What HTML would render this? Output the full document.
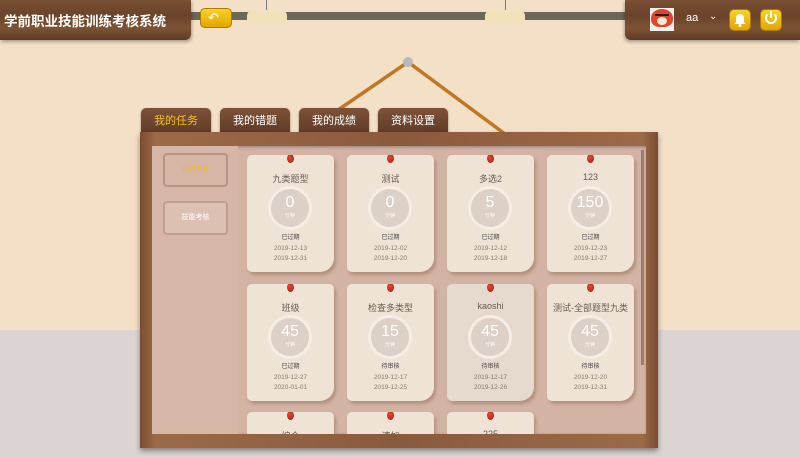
<!DOCTYPE html>
<html style="overflow:hidden;height:458px"><head><meta charset="utf-8"><style>
*{margin:0;padding:0;box-sizing:border-box}
body{width:800px;height:458px;overflow:hidden;position:relative;background:#f4dfc7;font-family:"Liberation Sans","Noto Sans CJK SC",sans-serif}
.a{position:absolute}
.wood{background:linear-gradient(180deg,#7a4f33,#6a432a 40%,#7d5335 70%,#5e3a24);}
.tab{position:absolute;top:108px;height:26px;border-radius:5px 5px 0 0;background:linear-gradient(#7e5238,#5e3a26);color:#fff;font-size:11px;text-align:center;line-height:26px;box-shadow:0 1px 2px rgba(0,0,0,.4)}
.card{position:absolute;width:87px;height:117px;background:#efe3d6;border-radius:5px 5px 14px 5px;box-shadow:2px 3px 3px rgba(120,80,60,.35);text-align:center;color:#6a5a52;overflow:hidden}
.card .pin{position:absolute;left:40px;top:-1px;width:7px;height:9px;border-radius:50%;background:radial-gradient(circle at 40% 40%,#e24a3a,#9c1a12)}
.card .t{position:absolute;top:17px;width:100%;font-size:9px}
.card .c{position:absolute;left:21px;top:31px;width:44px;height:44px;border-radius:50%;background:#ddd0c6;border:3px solid #f5ede6;color:#fff}
.card .c b{display:block;font-weight:normal;font-size:16px;margin-top:6px;line-height:16px}
.card .c i{display:block;font-style:normal;font-size:5px;margin-top:1px}
.card .s{position:absolute;top:77px;width:100%;font-size:6px;color:#444}
.card .d{position:absolute;top:89px;width:100%;font-size:6.5px;line-height:10px;color:#8a7a72}
.yb{position:absolute;width:22px;height:22px;border-radius:5px;background:linear-gradient(#f8d22a,#e2a500);border:1px solid #b07a00}
</style></head><body>
<div class="a" style="left:0;top:330px;width:800px;height:128px;background:#dcd4d2"></div>
<div class="a" style="left:266px;top:0;width:1px;height:10px;background:#777"></div>
<div class="a" style="left:505px;top:0;width:1px;height:10px;background:#777"></div>
<div class="a" style="left:190px;top:12px;width:440px;height:8px;background:#6c6757"></div>
<div class="a" style="left:247px;top:10px;width:40px;height:14px;background:#f2e2bb;border-radius:6px 6px 2px 2px"></div>
<div class="a" style="left:485px;top:10px;width:40px;height:14px;background:#f2e2bb;border-radius:6px 6px 2px 2px"></div>
<div class="a wood" style="left:0;top:0;width:191px;height:40px;border-radius:0 0 6px 0;box-shadow:1px 2px 3px rgba(0,0,0,.3)"></div>
<div class="a" style="left:4px;top:10px;color:#fff;font-size:13.5px;font-weight:bold">学前职业技能训练考核系统</div>
<div class="yb" style="left:200px;top:8px;width:32px;height:20px"></div>
<div class="a" style="left:208px;top:10px;color:#fff;font-size:13px">&#8630;</div>
<div class="a wood" style="left:625px;top:0;width:175px;height:40px;border-radius:0 0 0 6px;box-shadow:-1px 2px 3px rgba(0,0,0,.3)"></div>
<div class="a" style="left:650px;top:8px;width:24px;height:23px;background:#f3f0ec"></div>
<div class="a" style="left:651px;top:9px;width:22px;height:18px;border-radius:50% 50% 40% 40%;background:#e2452c"></div>
<div class="a" style="left:657px;top:17px;width:10px;height:8px;border-radius:50%;background:#f3e8d0"></div>
<div class="a" style="left:655px;top:14px;width:14px;height:2px;background:#222"></div>
<div class="a" style="left:686px;top:12px;color:#fff;font-size:11px">aa</div>
<div class="a" style="left:709px;top:11px;color:#fff;font-size:10px">&#8964;</div>
<div class="yb" style="left:729px;top:9px"></div>
<svg class="a" style="left:733px;top:12px" width="14" height="16"><path d="M7 2 C4 2 3 4 3 7 L3 10 L1.5 12 L12.5 12 L11 10 L11 7 C11 4 10 2 7 2Z" fill="#fff"/><circle cx="7" cy="13.5" r="1.5" fill="#fff"/></svg>
<div class="yb" style="left:760px;top:9px"></div>
<div class="a" style="left:765px;top:12px;width:12px;height:12px;border:2px solid #fff;border-radius:50%;border-top-color:transparent"></div>
<div class="a" style="left:770px;top:11px;width:2px;height:7px;background:#fff"></div>
<svg class="a" style="left:320px;top:50px" width="200" height="90"><path d="M18 60 L88 12 L185 84" stroke="#c07724" stroke-width="3.5" fill="none"/><circle cx="88" cy="12" r="5" fill="#b8b8b8"/></svg>
<div class="tab" style="left:141px;width:70px;color:#f2c11c">我的任务</div>
<div class="tab" style="left:220px;width:70px">我的错题</div>
<div class="tab" style="left:299px;width:70px">我的成绩</div>
<div class="tab" style="left:378px;width:70px">资料设置</div>
<div class="a" style="left:140px;top:132px;width:518px;height:316px;background:linear-gradient(90deg,#7b4c30,#9b6a48 3%,#8a5a3c 50%,#9b6a48 97%,#7b4c30);box-shadow:0 3px 5px rgba(0,0,0,.4)"></div>
<div class="a" style="left:152px;top:146px;width:494px;height:288px;background:#d3b3a4;box-shadow:inset 1px 1px 3px rgba(0,0,0,.3);overflow:hidden">
<div class="a" style="left:0;top:0;width:86px;height:288px;background:#d5b6a7"></div>
<div class="a" style="left:11px;top:7px;width:65px;height:34px;border-radius:4px;background:#d8b6a6;border:2px solid #b89485;color:#f0b830;font-size:7px;text-align:center;line-height:30px">我的考试</div>
<div class="a" style="left:11px;top:55px;width:65px;height:34px;border-radius:4px;background:#dcc0b2;border:2px solid #c09e90;color:#fff;font-size:7px;text-align:center;line-height:30px">技能考核</div>
<div class="a" style="left:489px;top:4px;width:3px;height:215px;background:#9a7d70"></div>
<div class="card" style="left:95px;top:9px"><div class="pin"></div><div class="t">九类题型</div><div class="c"><b>0</b><i>分钟</i></div><div class="s">已过期</div><div class="d">2019-12-13<br>2019-12-31</div></div>
<div class="card" style="left:195px;top:9px"><div class="pin"></div><div class="t">测试</div><div class="c"><b>0</b><i>分钟</i></div><div class="s">已过期</div><div class="d">2019-12-02<br>2019-12-20</div></div>
<div class="card" style="left:295px;top:9px"><div class="pin"></div><div class="t">多选2</div><div class="c"><b>5</b><i>分钟</i></div><div class="s">已过期</div><div class="d">2019-12-12<br>2019-12-18</div></div>
<div class="card" style="left:395px;top:9px"><div class="pin"></div><div class="t">123</div><div class="c"><b>150</b><i>分钟</i></div><div class="s">已过期</div><div class="d">2019-12-23<br>2019-12-27</div></div>
<div class="card" style="left:95px;top:138px"><div class="pin"></div><div class="t">班级</div><div class="c"><b>45</b><i>分钟</i></div><div class="s">已过期</div><div class="d">2019-12-27<br>2020-01-01</div></div>
<div class="card" style="left:195px;top:138px"><div class="pin"></div><div class="t">检查多类型</div><div class="c"><b>15</b><i>分钟</i></div><div class="s">待审核</div><div class="d">2019-12-17<br>2019-12-25</div></div>
<div class="card" style="left:295px;top:138px;background:#e6d9cd"><div class="pin"></div><div class="t">kaoshi</div><div class="c"><b>45</b><i>分钟</i></div><div class="s">待审核</div><div class="d">2019-12-17<br>2019-12-26</div></div>
<div class="card" style="left:395px;top:138px"><div class="pin"></div><div class="t">测试-全部题型九类</div><div class="c"><b>45</b><i>分钟</i></div><div class="s">待审核</div><div class="d">2019-12-20<br>2019-12-31</div></div>
<div class="card" style="left:95px;top:266px"><div class="pin"></div><div class="t">综合</div></div>
<div class="card" style="left:195px;top:266px"><div class="pin"></div><div class="t">速加</div></div>
<div class="card" style="left:295px;top:266px"><div class="pin"></div><div class="t">225</div></div>
</div>
</body></html>
